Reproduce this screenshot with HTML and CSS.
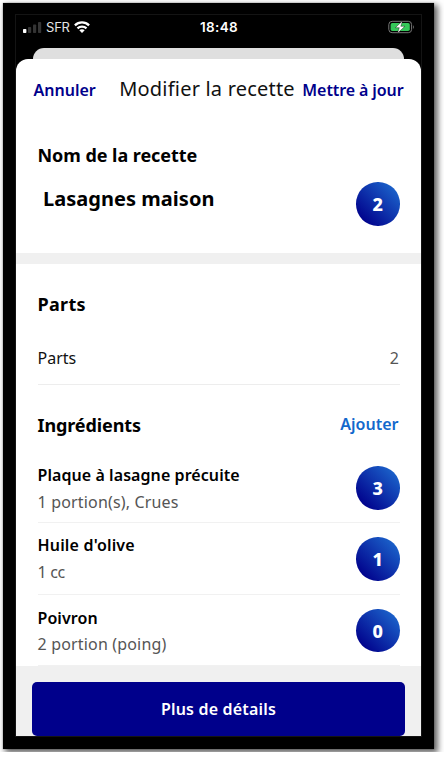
FILE: index.html
```html
<!DOCTYPE html>
<html lang="fr">
<head>
<meta charset="utf-8">
<title>Modifier la recette</title>
<link rel="stylesheet" href="styles.css">
</head>
<body>
<div class="phone">
  <div class="screen">
    <div class="status">
      <div class="carrier">
        <svg width="19" height="12" viewBox="0 0 19 12"><rect x="0" y="8" width="3.4" height="4" rx=".8" fill="#fff"/><rect x="5" y="6" width="3.2" height="6" rx=".8" fill="#343434"/><rect x="10" y="3.5" width="3.2" height="8.5" rx=".8" fill="#343434"/><rect x="15" y="1" width="3.2" height="11" rx=".8" fill="#343434"/></svg>
        <span>SFR</span>
        <svg width="16" height="12" viewBox="0 0 16 12" fill="none" stroke="#fff" stroke-width="2.3"><path d="M.9 4.300a10.200 10.200 0 0 1 14.200 0"/><path d="M3.500 7.400a6.500 6.500 0 0 1 9 0"/><path d="M8 12 5.300 9.300a3.700 3.700 0 0 1 5.400 0z" fill="#fff" stroke="none"/></svg>
      </div>
      <div class="time">18:48</div>
      <svg class="battery" width="27" height="14" viewBox="0 0 27 14"><rect x=".8" y="1.3" width="22.8" height="11.4" rx="3.3" fill="none" stroke="#777" stroke-width="1"/><rect x="2.6" y="3" width="19.2" height="8" rx="1.7" fill="#35c759"/><path d="M25.100 5.200c1.100.4 1.100 3.200 0 3.600z" fill="#777"/><path d="M14.600.8 7.300 7.700h4l-2 5.700 7.600-7.100h-4.100z" fill="#fff" stroke="#000" stroke-width=".4"/></svg>
    </div>
    <div class="backsheet"></div>
    <div class="sheet">
      <header class="nav">
        <span class="link">Annuler</span>
        <span class="title">Modifier la recette</span>
        <span class="link update">Mettre à jour</span>
      </header>
      <section class="recipe">
        <h2>Nom de la recette</h2>
        <div class="name"><span>Lasagnes maison</span><b class="points">2</b></div>
      </section>
      <section class="parts">
        <h2 class="wide">Parts</h2>
        <div class="servings"><span>Parts</span><span class="value">2</span></div>
      </section>
      <section class="ingredients">
        <div class="heading"><h2 class="tight">Ingrédients</h2><span class="add">Ajouter</span></div>
        <div class="item"><div><div class="food">Plaque à lasagne précuite</div><div class="qty">1 portion(s), Crues</div></div><b class="points">3</b></div>
        <div class="item second"><div><div class="food olive">Huile d'olive</div><div class="qty cc">1 cc</div></div><b class="points">1</b></div>
        <div class="item third"><div><div class="food">Poivron</div><div class="qty">2 portion (poing)</div></div><b class="points">0</b></div>
      </section>
      <footer class="footer"><div class="button">Plus de détails</div></footer>
    </div>
  </div>
</div>
</body>
</html>
```
FILE: styles.css
```css
* { box-sizing: border-box; }
body { margin: 0; padding: 3px; background: #fff; font: 16px/24px "Noto Sans", sans-serif; color: #111; white-space: nowrap; }
.phone { width: 431px; height: 746px; padding: 12px 13px 13px; background: #000; box-shadow: 3px 3px 6px 1px rgba(0,0,0,.6), 0 0 1px #777; }
.screen { width: 405px; height: 721px; overflow: hidden; display: flex; flex-direction: column; box-shadow: 0 0 0 1px #141414; }
.status { flex: none; height: 33px; padding: 0 6px 9px 7px; display: grid; grid-template-columns: 1fr auto 1fr; align-items: center; color: #fff; }
.carrier { display: flex; align-items: center; gap: 4px; font: 13px/24px Inter, sans-serif; color: #e4e4e4; }
.carrier span { letter-spacing: -.2px; }
.time { font: 600 13.5px/24px Inter, sans-serif; letter-spacing: .35px; }
.battery { justify-self: end; }
.backsheet { flex: none; height: 24px; margin: 0 17px -13px; border-radius: 11px 11px 0 0; background: #dfdfdf; }
.sheet { position: relative; flex: 1; border-radius: 12px 12px 0 0; background: #fff; overflow: hidden; }
.nav { height: 60px; padding: 2px 17.5px 0 17.5px; display: flex; align-items: center; }
.link { color: #00008b; font-weight: 600; }
.title { margin: -2px 0 0 23.5px; font-size: 20px; letter-spacing: .2px; flex: 1; }
.update { letter-spacing: -.1px; }
h2 { margin: 0; font-size: 18px; line-height: 24px; font-weight: 700; color: #000; letter-spacing: -.05px; }
.wide { letter-spacing: .3px; }
.tight { letter-spacing: -.1px; }
.recipe { height: 145px; padding: 24px 21.5px 0; border-bottom: 11px solid #f0f0f0; }
.name { height: 44px; margin-top: 15px; display: flex; justify-content: space-between; }
.name span { padding-left: 5.5px; font-size: 20px; line-height: 33px; font-weight: 700; color: #000; letter-spacing: .03px; }
.points { flex: none; width: 43.5px; height: 43.5px; border-radius: 50%; background: linear-gradient(45deg, #00008b 12%, #1b62ca 88%); color: #fff; text-align: center; font-size: 18px; line-height: 44px; font-weight: 800; }
.parts { padding: 28px 21.5px 0; }
.servings { height: 54px; margin-top: 15px; padding: 13px .5px 0 0; line-height: 28px; border-bottom: 1px solid #ededed; display: flex; justify-content: space-between; }
.servings .value { color: #555; }
.ingredients { height: 281px; padding: 28px 21.5px 0; }
.heading { display: flex; justify-content: space-between; padding-right: 1px; }
.add { margin-top: -1px; color: #1268cc; font-weight: 600; }
.item { height: 86px; padding-top: 26px; display: flex; justify-content: space-between; border-bottom: 1px solid #f1f1f1; }
.item .points { margin-top: 3px; }
.food { color: #000; font-weight: 600; letter-spacing: .07px; }
.olive { letter-spacing: .18px; }
.qty { margin-top: 3px; color: #555; letter-spacing: .17px; }
.cc { letter-spacing: -.3px; }
.second { height: 72px; padding-top: 10px; }
.second .points { margin-top: 4px; }
.third { height: 71px; padding-top: 11px; }
.third .points { margin-top: 2.5px; }
.third .qty { margin-top: 2px; }
.footer { height: 71px; padding: 16px 16px 0; background: #f0f0f0; }
.button { height: 54px; border-radius: 5px; background: #00008b; color: #fff; text-align: center; font-weight: 600; line-height: 54px; letter-spacing: .18px; }
```
